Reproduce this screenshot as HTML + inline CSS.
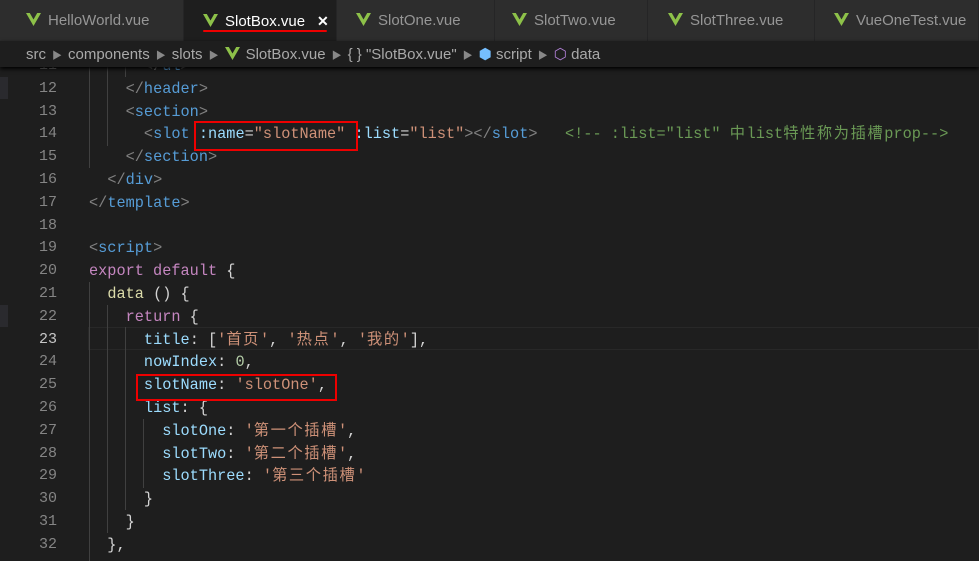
<!DOCTYPE html>
<html><head><meta charset="utf-8"><style>
*{margin:0;padding:0;box-sizing:border-box}
body{width:979px;height:561px;overflow:hidden;background:#1e1e1e;position:relative;font-family:"Liberation Sans","Noto Sans CJK SC",sans-serif}
.tabs{position:absolute;left:0;top:0;width:979px;height:41px;background:#252526}
.tab{position:absolute;top:0;height:41px;background:#2d2d2d;border-right:1px solid #252526;color:#969696;font-size:15px;line-height:42px}
.tab.act{background:#1e1e1e;color:#fff}
.v{display:inline-block;width:15px;height:13px;vertical-align:-1px;margin-right:7px}
.bc{position:absolute;left:0;top:41px;width:979px;height:26px;background:#1e1e1e;color:#a9a9a9;font-size:15px;line-height:28px;padding-left:26px;box-shadow:0 2px 4px #000;z-index:3}
.bc .a{color:#888;font-size:10px;margin:0 6px}
.ln{position:absolute;left:0;width:57px;text-align:right;color:#858585;font:15px/22.8px "Liberation Mono",monospace}
.cd{position:absolute;left:89px;white-space:pre;color:#d4d4d4;font:15.25px/22.8px "Liberation Mono","Noto Sans CJK SC",monospace}
.cj{letter-spacing:1.6px}
.t{color:#808080}.n{color:#569cd6}.at{color:#9cdcfe}.s{color:#ce9178}.c{color:#6a9955}.k{color:#c586c0}.f{color:#dcdcaa}.num{color:#b5cea8}
.g{position:absolute;width:1px;background:#404040}
.box{position:absolute;border:2px solid #e00}
</style></head><body>
<svg width="0" height="0" style="position:absolute"><defs><symbol id="vue" viewBox="0 0 15 13"><path d="M0 0h3.8L7.5 6.5 11.2 0H15L7.5 13z" fill="#8dc149"/></symbol></defs></svg>
<div class="tabs">
<div class="tab" style="left:0;width:184px;padding-left:26px"><svg class="v"><use href="#vue"/></svg>HelloWorld.vue</div>
<div class="tab act" style="left:184px;width:153px;padding-left:19px"><svg class="v"><use href="#vue"/></svg>SlotBox.vue<span style="margin-left:12px;font-size:14px;font-weight:bold">✕</span></div>
<div class="tab" style="left:337px;width:158px;padding-left:19px"><svg class="v"><use href="#vue"/></svg>SlotOne.vue</div>
<div class="tab" style="left:495px;width:153px;padding-left:17px"><svg class="v"><use href="#vue"/></svg>SlotTwo.vue</div>
<div class="tab" style="left:648px;width:167px;padding-left:20px"><svg class="v"><use href="#vue"/></svg>SlotThree.vue</div>
<div class="tab" style="left:815px;width:164px;padding-left:19px"><svg class="v"><use href="#vue"/></svg>VueOneTest.vue</div>
</div>
<div style="position:absolute;left:203px;top:30px;width:124px;height:2px;background:#e00;border-radius:1px"></div>
<div class="bc">src<span class="a">▶</span>components<span class="a">▶</span>slots<span class="a">▶</span><svg class="v" style="margin-right:6px"><use href="#vue"/></svg>SlotBox.vue<span class="a">▶</span>{ } "SlotBox.vue"<span class="a">▶</span><span style="color:#75beff">⬢</span> script<span class="a">▶</span><span style="color:#b180d7">⬡</span> data</div>
<div style="position:absolute;left:0;top:77px;width:8px;height:22px;background:#2a2a2e"></div>
<div style="position:absolute;left:0;top:305px;width:8px;height:22px;background:#2a2a2e"></div>
<div style="position:absolute;left:88px;top:327px;width:891px;height:23px;border:1px solid #282828"></div>
<div class="g" style="left:89px;top:54px;height:114px"></div>
<div class="g" style="left:107px;top:54px;height:92px"></div>
<div class="g" style="left:125px;top:54px;height:23px"></div>
<div class="g" style="left:89px;top:282px;height:279px"></div>
<div class="g" style="left:107px;top:305px;height:228px"></div>
<div class="g" style="left:125px;top:327px;height:183px"></div>
<div class="g" style="left:143px;top:419px;height:69px"></div>
<div class="ln" style="top:55px">11<br>12<br>13<br>14<br>15<br>16<br>17<br>18<br>19<br>20<br>21<br>22<br><span style="color:#c6c6c6">23</span><br>24<br>25<br>26<br>27<br>28<br>29<br>30<br>31<br>32</div>
<div class="cd" style="top:55px">      <span class="t">&lt;/</span><span class="n">ul</span><span class="t">&gt;</span>
    <span class="t">&lt;/</span><span class="n">header</span><span class="t">&gt;</span>
    <span class="t">&lt;</span><span class="n">section</span><span class="t">&gt;</span>
      <span class="t">&lt;</span><span class="n">slot</span> <span class="at">:name</span>=<span class="s">"slotName"</span> <span class="at">:list</span>=<span class="s">"list"</span><span class="t">&gt;&lt;/</span><span class="n">slot</span><span class="t">&gt;</span>   <span class="c">&lt;!-- :list="list" <span class="cj">中</span>list<span class="cj">特性称为插槽</span>prop--&gt;</span>
    <span class="t">&lt;/</span><span class="n">section</span><span class="t">&gt;</span>
  <span class="t">&lt;/</span><span class="n">div</span><span class="t">&gt;</span>
<span class="t">&lt;/</span><span class="n">template</span><span class="t">&gt;</span>

<span class="t">&lt;</span><span class="n">script</span><span class="t">&gt;</span>
<span class="k">export default</span> {
  <span class="f">data</span> () {
    <span class="k">return</span> {
      <span class="at">title</span>: [<span class="s">'<span class="cj">首页</span>'</span>, <span class="s">'<span class="cj">热点</span>'</span>, <span class="s">'<span class="cj">我的</span>'</span>],
      <span class="at">nowIndex</span>: <span class="num">0</span>,
      <span class="at">slotName</span>: <span class="s">'slotOne'</span>,
      <span class="at">list</span>: {
        <span class="at">slotOne</span>: <span class="s">'<span class="cj">第一个插槽</span>'</span>,
        <span class="at">slotTwo</span>: <span class="s">'<span class="cj">第二个插槽</span>'</span>,
        <span class="at">slotThree</span>: <span class="s">'<span class="cj">第三个插槽</span>'</span>
      }
    }
  },</div>
<div class="box" style="left:194px;top:121px;width:164px;height:30px"></div>
<div class="box" style="left:136px;top:374px;width:201px;height:27px"></div>
</body></html>
